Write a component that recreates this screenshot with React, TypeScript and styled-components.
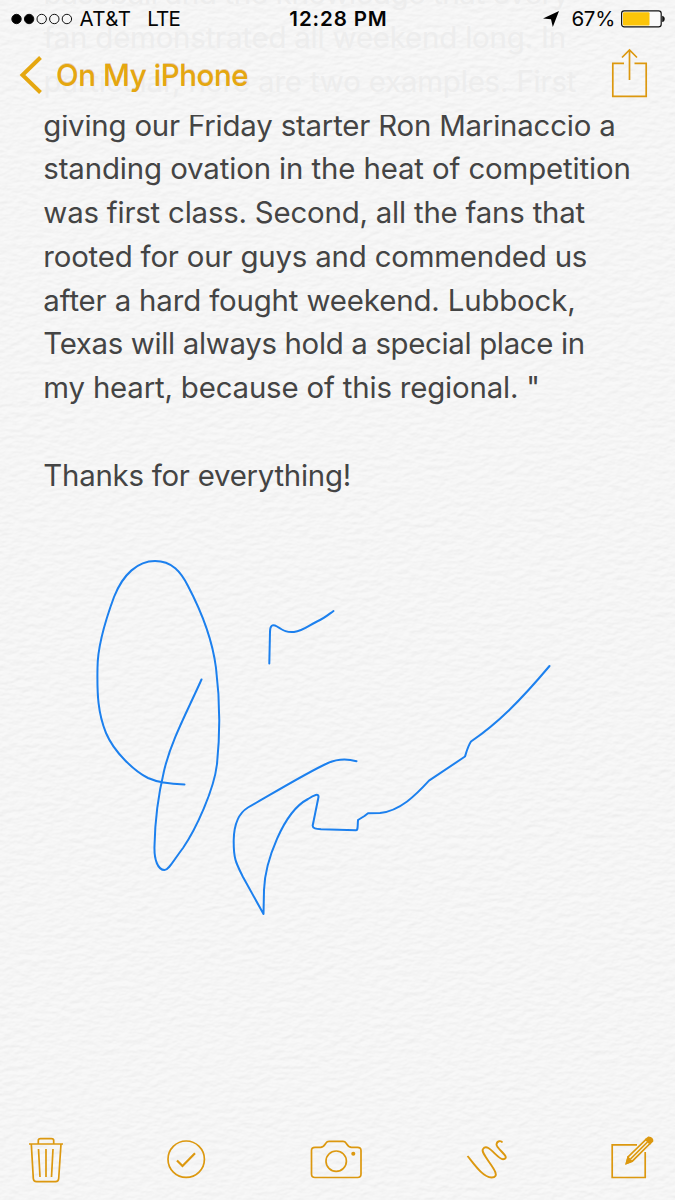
import React from "react";
import styled, { createGlobalStyle } from "styled-components";

const Global = createGlobalStyle`
  html, body { margin: 0; padding: 0; background: #f6f6f6; }
  * { box-sizing: border-box; }
`;

const Screen = styled.div`
  position: relative;
  width: 675px;
  height: 1200px;
  overflow: hidden;
  display: flex;
  flex-direction: column;
  background: #f6f6f6;
  font-family: Inter, "Liberation Sans", sans-serif;
  isolation: isolate;
`;

const Paper = styled.svg`
  position: absolute;
  inset: 0;
  width: 100%;
  height: 100%;
  z-index: -1;
`;

const Header = styled.header`
  position: relative;
  flex: none;
  height: 115px;
  overflow: hidden;
  display: flex;
  flex-direction: column;
`;

const ScrolledText = styled.div`
  position: absolute;
  left: 43.5px;
  top: -27.6px;
  color: #ededed;
`;

const StatusBar = styled.div`
  position: relative;
  height: 37px;
  display: grid;
  grid-template-columns: 1fr auto 1fr;
  align-items: center;
  padding: 0 9px 0 11px;
  color: #050505;
  font-size: 20.5px;
  line-height: 24px;
`;

const StatusGroup = styled.div<{ $end?: boolean }>`
  display: flex;
  align-items: center;
  justify-content: ${(p) => (p.$end ? "flex-end" : "flex-start")};
`;

const StatusText = styled.span<{ $ml?: number; $ls?: number; $bold?: boolean }>`
  margin-left: ${(p) => p.$ml ?? 0}px;
  letter-spacing: ${(p) => p.$ls ?? 0}px;
  font-weight: ${(p) => (p.$bold ? 600 : 400)};
  white-space: nowrap;
`;

const BatteryIcon = styled.svg`
  display: block;
  margin-left: 6px;
`;

const NavBar = styled.div`
  position: relative;
  flex: 1;
  display: flex;
  align-items: flex-start;
  justify-content: space-between;
  padding: 11px 27.5px 0 18px;
`;

const BackButton = styled.div`
  display: flex;
  align-items: center;
  gap: 14px;
  margin-top: 7px;
  height: 40px;
  color: #e5a710;
  font-size: 29.5px;
  line-height: 38px;
  font-weight: 450;
  letter-spacing: -0.42px;
  text-shadow: 0 -1px 0 rgba(190, 105, 0, 0.3);
`;

const Body = styled.main`
  flex: 1;
  overflow: hidden;
  display: flex;
  flex-direction: column;
`;

const Note = styled.div`
  flex: none;
  margin-top: -11.4px;
  padding-left: 43.3px;
  color: #444;
`;

const Line = styled.div<{ $ls: number }>`
  height: 43.75px;
  line-height: 43.75px;
  font-size: 29.4px;
  white-space: pre;
  letter-spacing: ${(p) => p.$ls}px;
`;

const Drawing = styled.svg`
  display: block;
  flex: none;
  margin-top: 21px;
  fill: none;
  stroke: #1c80ee;
  stroke-width: 2;
  stroke-linecap: round;
  stroke-linejoin: round;
`;

const Toolbar = styled.footer`
  flex: none;
  height: 80px;
  display: flex;
  align-items: flex-start;
  padding: 14px 0 0 26px;
`;

const Icon = styled.svg<{ $ml?: number }>`
  display: block;
  flex: none;
  margin-left: ${(p) => p.$ml ?? 0}px;
  overflow: visible;
  fill: none;
  stroke: #dc980f;
  stroke-width: 1.7;
`;

const hidden: [string, number][] = [
  ["baseball and the knowledge that every", -0.3],
  ["fan demonstrated all weekend long. In", -0.18],
  ["particular, here are two examples. First", -0.16],
];

const lines: [string, number][] = [
  ["giving our Friday starter Ron Marinaccio a", -0.19],
  ["standing ovation in the heat of competition", -0.12],
  ["was first class. Second, all the fans that", -0.2],
  ["rooted for our guys and commended us", -0.18],
  ["after a hard fought weekend. Lubbock,", -0.14],
  ["Texas will always hold a special place in", -0.33],
  ["my heart, because of this regional. \"", -0.17],
  ["", 0],
  ["Thanks for everything!", -0.25],
];

export default function App() {
  return (
    <Screen>
      <Global />
      <Paper>
        <filter id="paper" x="0" y="0" width="100%" height="100%" colorInterpolationFilters="sRGB">
          <feTurbulence type="fractalNoise" baseFrequency="0.1 0.19" numOctaves="3" seed="4" />
          <feColorMatrix values="0 0 0 0 0.5  0 0 0 0 0.5  0 0 0 0 0.5  1 0 0 0 0" />
          <feDiffuseLighting surfaceScale="0.42" diffuseConstant="1.13" lightingColor="#fff">
            <feDistantLight azimuth="250" elevation="58" />
          </feDiffuseLighting>
        </filter>
        <rect width="675" height="1200" filter="url(#paper)" opacity="0.27" />
      </Paper>

      <Header>
        <ScrolledText>
          {hidden.map(([t, ls], i) => (
            <Line key={i} $ls={ls}>{t}</Line>
          ))}
        </ScrolledText>
        <StatusBar>
          <StatusGroup>
            <svg width="62" height="12" viewBox="0 0 62 12" stroke="#111" strokeWidth="1">
              {[0, 1, 2, 3, 4].map((i) => (
                <circle key={i} cx={5.5 + i * 12.6} cy="6" r="4.7" fill={i < 2 ? "#000" : "none"} />
              ))}
            </svg>
            <StatusText $ml={6.5} $ls={0.4}>AT&amp;T</StatusText>
            <StatusText $ml={16} $ls={-0.9}>LTE</StatusText>
          </StatusGroup>
          <StatusText $bold $ls={0.9}>12:28 PM</StatusText>
          <StatusGroup $end>
            <svg width="17" height="16" viewBox="0 0 17 16"><path d="M16 0 0 7.4 8 8.2 9.8 16Z" fill="#000" /></svg>
            <StatusText $ml={11} $ls={-0.3}>67%</StatusText>
            <BatteryIcon width="45" height="18" viewBox="0 0 45 18">
              <rect x="0.6" y="0.9" width="39.6" height="16" rx="2.6" fill="#fafafa" stroke="#111" strokeWidth="1.2" />
              <rect x="2" y="2.3" width="26.5" height="13.2" rx="1" fill="#fdc509" />
              <path d="M41.2 5.8c3.400 .5 3.400 5.800 0 6.300Z" fill="#111" />
            </BatteryIcon>
          </StatusGroup>
        </StatusBar>
        <NavBar>
          <BackButton>
            <svg width="24" height="38" viewBox="0 0 24 38" fill="none" stroke="#e5a710" strokeWidth="4">
              <path d="M22.500 1.500 4.500 19 22.500 36.500" />
            </svg>
            On My iPhone
          </BackButton>
          <Icon width="37" height="50" viewBox="0 0 37 50">
            <path d="M13 15.300H1.800V48.300H35.200V15.300H23.500M18.500 32V2M11 9.500l7.500-7.500 7.500 7.500" />
          </Icon>
        </NavBar>
      </Header>

      <Body>
        <Note>
          {lines.map(([t, ls], i) => (
            <Line key={i} $ls={ls}>{t}</Line>
          ))}
        </Note>
        <Drawing width="675" height="420" viewBox="0 518 675 420">
          <path d="M184.500 784.500C170 784 158 782.500 148 778C134 771 114 752 106 733C98 713 97 695 97.500 668C97.500 644 107 616 114 597C123 574 138 561 155 561C172 561 181 572 188 586C198 605 212 636 216 668C220 700 220 735 217 764C214 790 196 829 183 848C173 861 169 870 164.500 870C158 870 154 860 154.500 846C155 820 158 796 164 771C171 741 187 712 201.500 679.500" />
          <path d="M269.300 663.500 270 632C270 626 272 623.500 277 626.500C284 631 287 632.500 294 632C303 631 308 626 317 621.500C324 618.500 328 615 333.500 611" />
          <path d="M356.500 761.200C347 758.500 338 758.500 328 763C308 772 270 795 248 807.500C239 813 234 825 233.700 840C233.500 859 236 863 243 877L263.500 914L264 890C265 862 283 812 308 799C314 795 319 793 318.500 797L312.700 825.500C312.500 828.500 316 829 321 829.300L356 830.300C358 830 357.500 828 358 820L364.500 816L368 813.300L380 813C400 811 416 795 429 780.700L465 756.500C467 750 468 746 471 741.500C498 723 520 701 549.500 666" />
        </Drawing>
      </Body>

      <Toolbar>
        <Icon width="40" height="50" viewBox="0 0 40 50">
          <path d="M3 10H37M12.300 10V6.500Q12.300 4.600 14.500 4.600H25.500Q27.700 4.600 27.700 6.500V10M5.300 10 7.300 44.500Q7.500 47.600 10.500 47.600H29.500Q32.500 47.600 32.700 44.500L35 10M12.500 15 14 43M20 15V43M27 15 25.500 43" />
        </Icon>
        <Icon $ml={100} width="40" height="50" viewBox="0 0 40 50">
          <circle cx="20.200" cy="25.200" r="18.200" /><path d="M11 26.500 16.500 32 29 19.300" strokeWidth="2.200" />
        </Icon>
        <Icon $ml={104} width="52" height="50" viewBox="0 0 52 50">
          <path d="M1.500 16.500Q1.500 13.300 5 13.300H10.500C14 13.300 14.500 11 16 9Q17 7.300 19 7.300H33Q35 7.300 36 9C37.500 11 38 13.300 41.500 13.300H47.500Q51 13.300 51 16.500V40Q51 43.500 47.500 43.500H5Q1.500 43.500 1.500 40Z" />
          <circle cx="26.200" cy="27.200" r="10.200" /><circle cx="43.300" cy="19.700" r="1.200" fill="#dc980f" />
        </Icon>
        <Icon $ml={105} width="40" height="50" viewBox="0 0 40 50">
          <path d="M.5 22C7 30 16 43.500 24.500 43.500C39 43 12 20 16 15C21 8 30 25 36 25.200C45 24 29.500 15 29.500 10.500C30 6.500 34 6.500 35.500 8.500" strokeWidth="1.900" />
        </Icon>
        <Icon $ml={103} width="44" height="50" viewBox="0 0 44 50">
          <path d="M27 10.800H2.200V43.500H35.200V18" />
          <path d="M16.500 29.300 18.300 22.700 36 5.500 40 9.500 22.300 27.200Z" fill="#f7f5ee" />
          <path d="M16.500 29.300 18 23.500 21.500 27.200Z" fill="#dc980f" />
          <path d="M20.500 25 37.500 8" /><path d="M36 5.500 38.500 3.300Q43 4 42.500 7L40 9.500Z" fill="#dc980f" />
        </Icon>
      </Toolbar>
    </Screen>
  );
}
